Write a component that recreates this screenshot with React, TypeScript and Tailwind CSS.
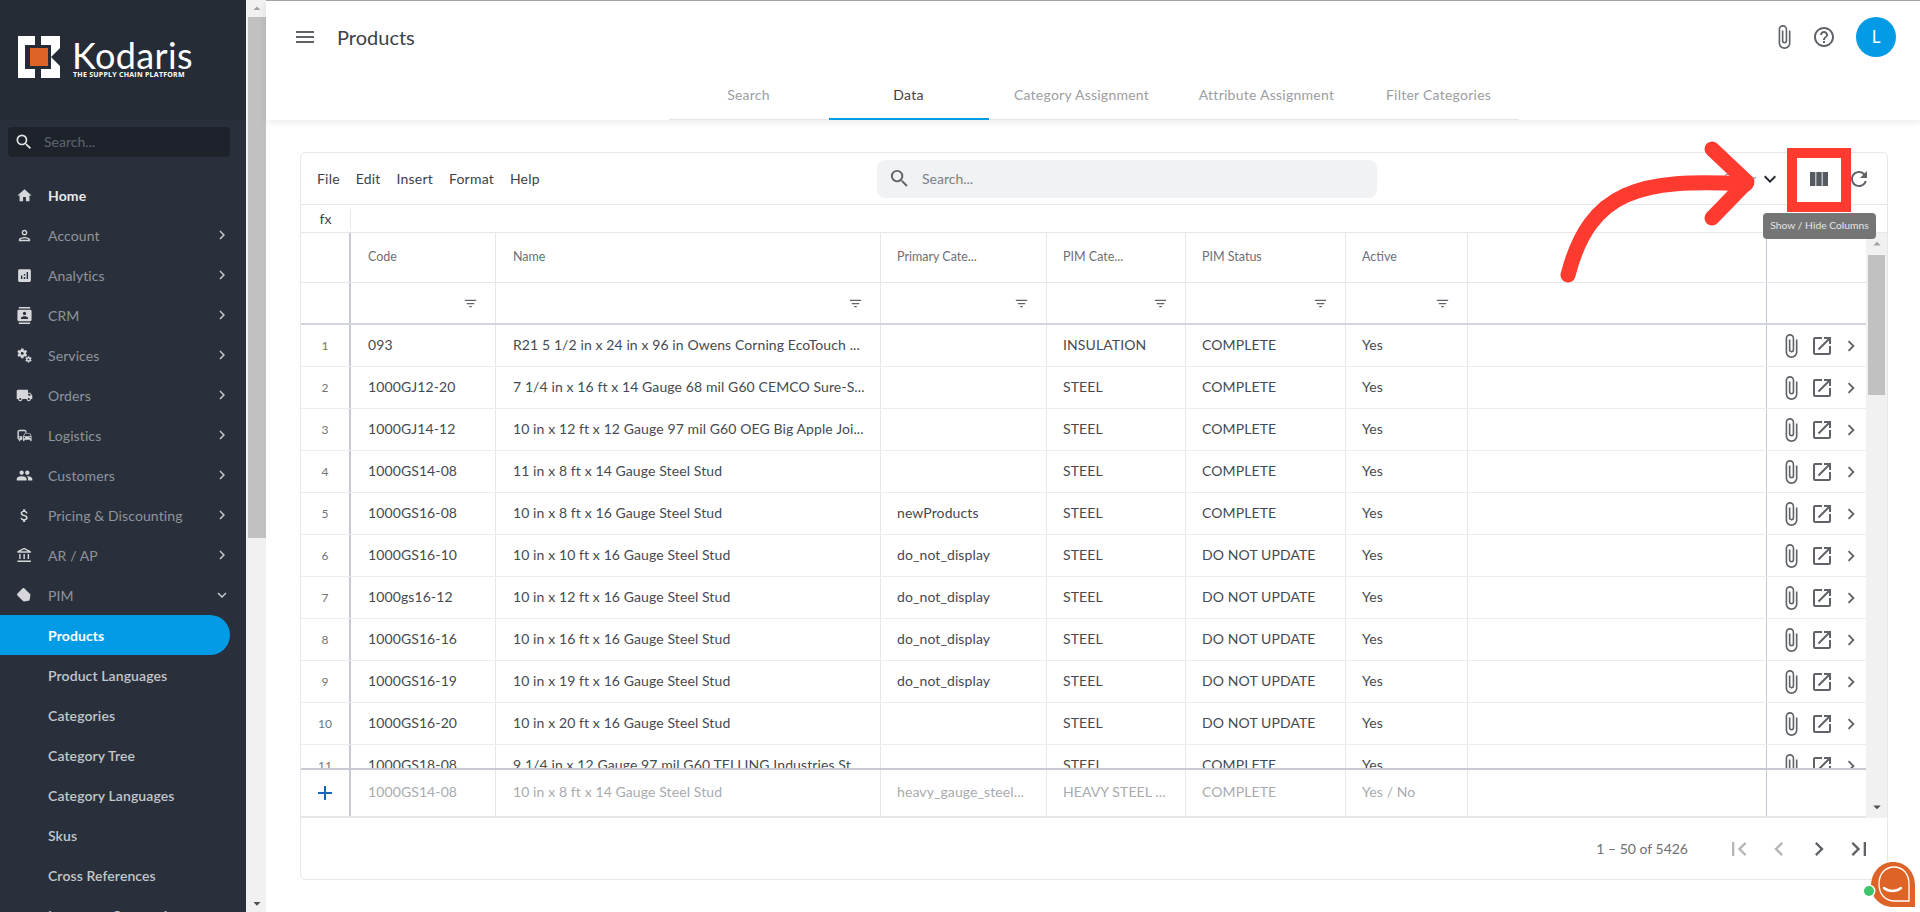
import { MdHome, MdOutlinePerson, MdAnalytics, MdContacts, MdMiscellaneousServices, MdLocalShipping, MdCommute, MdPeople, MdAttachMoney, MdOutlineAccountBalance, MdLabel, MdChevronRight, MdExpandMore, MdSearch, MdMenu, MdAttachFile, MdHelpOutline, MdRefresh, MdFilterList, MdOpenInNew, MdAdd, MdFirstPage, MdLastPage, MdChevronLeft, MdArrowDropUp, MdArrowDropDown } from 'react-icons/md'

const font = "font-['Lato','Open_Sans',sans-serif]"
const gridCols = 'grid grid-cols-[50px_145px_385px_166px_139px_160px_122px_299px_99px]'

const menu = [
  { label: 'Home', icon: MdHome, active: true },
  { label: 'Account', icon: MdOutlinePerson, arrow: true },
  { label: 'Analytics', icon: MdAnalytics, arrow: true },
  { label: 'CRM', icon: MdContacts, arrow: true },
  { label: 'Services', icon: MdMiscellaneousServices, arrow: true },
  { label: 'Orders', icon: MdLocalShipping, arrow: true },
  { label: 'Logistics', icon: MdCommute, arrow: true },
  { label: 'Customers', icon: MdPeople, arrow: true },
  { label: 'Pricing & Discounting', icon: MdAttachMoney, arrow: true },
  { label: 'AR / AP', icon: MdOutlineAccountBalance, arrow: true },
]

const subMenu = ['Product Languages', 'Categories', 'Category Tree', 'Category Languages', 'Skus', 'Cross References', 'Inventory Companies']

const rows = [
  ['093', 'R21 5 1/2 in x 24 in x 96 in Owens Corning EcoTouch ...', '', 'INSULATION', 'COMPLETE'],
  ['1000GJ12-20', '7 1/4 in x 16 ft x 14 Gauge 68 mil G60 CEMCO Sure-S...', '', 'STEEL', 'COMPLETE'],
  ['1000GJ14-12', '10 in x 12 ft x 12 Gauge 97 mil G60 OEG Big Apple Joi...', '', 'STEEL', 'COMPLETE'],
  ['1000GS14-08', '11 in x 8 ft x 14 Gauge Steel Stud', '', 'STEEL', 'COMPLETE'],
  ['1000GS16-08', '10 in x 8 ft x 16 Gauge Steel Stud', 'newProducts', 'STEEL', 'COMPLETE'],
  ['1000GS16-10', '10 in x 10 ft x 16 Gauge Steel Stud', 'do_not_display', 'STEEL', 'DO NOT UPDATE'],
  ['1000gs16-12', '10 in x 12 ft x 16 Gauge Steel Stud', 'do_not_display', 'STEEL', 'DO NOT UPDATE'],
  ['1000GS16-16', '10 in x 16 ft x 16 Gauge Steel Stud', 'do_not_display', 'STEEL', 'DO NOT UPDATE'],
  ['1000GS16-19', '10 in x 19 ft x 16 Gauge Steel Stud', 'do_not_display', 'STEEL', 'DO NOT UPDATE'],
  ['1000GS16-20', '10 in x 20 ft x 16 Gauge Steel Stud', '', 'STEEL', 'DO NOT UPDATE'],
  ['1000GS18-08', '9 1/4 in x 12 Gauge 97 mil G60 TELLING Industries St...', '', 'STEEL', 'COMPLETE'],
]

const headers = ['Code', 'Name', 'Primary Cate...', 'PIM Cate...', 'PIM Status', 'Active']

function Sidebar() {
  return (
    <aside className="w-[246px] h-full shrink-0 bg-[#2a303b] overflow-hidden flex flex-col">
      {/* logo */}
      <div className="h-[120px] shrink-0 bg-[#262c36] flex items-start pt-[36px] pl-[18px] gap-[12px]">
        <svg width="42" height="42" viewBox="0 0 42 42" className="shrink-0">
          <path fill="#fff" d="M0 0H17V9H7V33H17V42H0Z" />
          <path fill="#fff" d="M23 0H42V12L33 21L42 30V42H23V33H33V9H23Z" />
          <rect x="12" y="12" width="18" height="18" fill="#dd6326" />
        </svg>
        <div className="flex flex-col text-white">
          <span className="font-['Lato',sans-serif] text-[36px] leading-[26px] tracking-[0.4px] mt-[6px]">Kodaris</span>
          <span className="font-['Open_Sans',sans-serif] font-bold text-[7px] leading-[8px] tracking-[0.25px] mt-[3px] ml-[1px] whitespace-nowrap">THE SUPPLY CHAIN PLATFORM</span>
        </div>
      </div>

      {/* search */}
      <div className="pl-[8px] pr-[16px] pt-[8px] pb-[18px]">
        <div className="h-[30px] rounded bg-[#1e232b] flex items-center pl-[6px] gap-[10px] -mt-px">
          <MdSearch size={20} className="text-[#e4e4e4]" />
          <span className="text-[14px] text-[#5d646f] pb-[1px]">Search...</span>
        </div>
      </div>

      <nav className="flex flex-col tracking-[0.1px]">
        {menu.map(m => (
          <div key={m.label} className="h-[40px] shrink-0 flex items-center pl-[16px] pr-[15px]">
            <m.icon size={17} className="text-[#d5d7da] shrink-0" />
            <span className={`ml-[15px] flex-1 text-[14px] ${m.active ? 'text-[#e8e9eb] font-bold' : 'text-[#8f949c]'}`}>{m.label}</span>
            {m.arrow && <MdChevronRight size={18} className="text-[#c5c7cb]" />}
          </div>
        ))}
        <div className="h-[40px] shrink-0 flex items-center pl-[16px] pr-[15px]">
          <MdLabel size={17} className="text-[#d5d7da] shrink-0 rotate-45" />
          <span className="ml-[15px] flex-1 text-[14px] text-[#8f949c]">PIM</span>
          <MdExpandMore size={18} className="text-[#c5c7cb]" />
        </div>
        <div className="h-[40px] shrink-0 w-[230px] rounded-r-[20px] bg-[#039be5] flex items-center pl-[48px] text-[14px] font-bold text-white">Products</div>
        {subMenu.map(s => (
          <div key={s} className="h-[40px] shrink-0 flex items-center pl-[48px] text-[14px] font-semibold text-[#c3c6ca]">{s}</div>
        ))}
      </nav>
    </aside>
  )
}

function PageScrollbar() {
  return (
    <div className="w-[20px] h-full shrink-0 bg-[#f1f1f1] flex flex-col items-center pl-[2px]">
      <MdArrowDropUp size={18} className="text-[#a3a3a3] h-[17px] shrink-0" />
      <div className="w-full h-[521px] bg-[#c1c1c1] shrink-0" />
      <div className="flex-1" />
      <MdArrowDropDown size={18} className="text-[#505050] h-[17px] shrink-0" />
    </div>
  )
}

function Header() {
  return (
    <header className="h-[119px] shrink-0 bg-white shadow-[0_2px_8px_rgba(0,0,0,0.09)] flex flex-col relative">
      <div className="h-[71px] flex items-center pl-[27px] pr-[25px]">
        <MdMenu size={24} className="text-[#5f6368]" />
        <h1 className="ml-[20px] text-[20px] text-[#3c4149] flex-1">Products</h1>
        <MdAttachFile size={26} className="text-[#5f6368]" />
        <MdHelpOutline size={24} className="text-[#5f6368] ml-[15px]" />
        <div className="ml-[20px] w-[40px] h-[40px] rounded-full bg-[#039be5] flex items-center justify-center text-white text-[17px]">L</div>
      </div>
      <div className="flex justify-center h-[48px] text-[14px] text-[#9a9ea3] tracking-[0.25px]">
        <div className="flex border-b border-[#e6e6e6]">
          <div className="w-[160px] flex items-center justify-center pb-[2px]">Search</div>
          <div className="w-[160px] flex items-center justify-center pb-[2px] text-[#3c4149] border-b-2 border-[#039be5] -mb-px">Data</div>
          <div className="w-[186px] flex items-center justify-center pb-[2px]">Category Assignment</div>
          <div className="w-[184px] flex items-center justify-center pb-[2px]">Attribute Assignment</div>
          <div className="w-[160px] flex items-center justify-center pb-[2px]">Filter Categories</div>
        </div>
      </div>
    </header>
  )
}

function Toolbar() {
  return (
    <div className="h-[52px] shrink-0 border-b border-[#e6e7ea] flex items-center relative text-[#3c4149] text-[14px]">
      <div className="w-[576px] pl-[16px] flex gap-[16px] tracking-[0.2px]">
        <span>File</span><span>Edit</span><span>Insert</span><span>Format</span><span>Help</span>
      </div>
      <div className="w-[500px] h-[38px] rounded-lg bg-[#f1f2f4] flex items-center pl-[11px] gap-[11px]">
        <MdSearch size={23} className="text-[#5f6368]" />
        <span className="text-[#7c8087]">Search...</span>
      </div>
      <div className="flex-1 flex items-center pl-[347px]">
        <span className="text-[#9a9ea3]">Filter</span>
        <MdExpandMore size={24} className="ml-[2px] text-[#262b33]" />
        {/* show / hide columns */}
        <svg width="18" height="14" viewBox="0 0 18 14" className="ml-[28px] shrink-0">
          <path fill="#555a61" d="M0 0H5.4V14H0ZM6.3 0H11.7V14H6.3ZM12.6 0H18V14H12.6Z" />
        </svg>
        <MdRefresh size={24} className="ml-[19px] text-[#5f6368]" />
      </div>
    </div>
  )
}

function HeadRows() {
  return (
    <div className="shrink-0">
      <div className={`${gridCols} h-[50px] border-b border-[#e6e7ea] text-[12.5px] text-[#6c7077]`}>
        <div className="border-r-2 border-[#c6c8d2]" />
        {headers.map((h, j) => (
          <div key={h} className={`border-r border-[#e6e7ea] flex items-center ${j < 2 ? 'pl-[17px]' : 'pl-[16px]'}`}>{h}</div>
        ))}
        <div className="border-r border-[#c6c8d2]" />
        <div />
      </div>
      <div className={`${gridCols} h-[42px] border-b-2 border-[#d3d5dc]`}>
        <div className="border-r-2 border-[#c6c8d2]" />
        {headers.map(h => (
          <div key={h} className="border-r border-[#e6e7ea] flex items-center justify-end pr-[17px]">
            <MdFilterList size={15} className="text-[#5f6368]" />
          </div>
        ))}
        <div className="border-r border-[#c6c8d2]" />
        <div />
      </div>
    </div>
  )
}

function BodyRows() {
  return (
    <div className="flex-1 overflow-hidden">
      {rows.map((r, i) => (
        <div key={r[0]} className={`${gridCols} h-[42px] border-b border-[#eceded] text-[14px] text-[#454a52] tracking-[0.1px]`}>
          <div className="border-r-2 border-[#c6c8d2] flex items-center justify-center text-[12px] text-[#70747b]">{i + 1}</div>
          {r.map((c, j) => (
            <div key={j} className={`border-r border-[#e6e7ea] flex items-center pb-[2px] whitespace-nowrap ${j < 2 ? 'pl-[17px]' : 'pl-[16px]'}`}>{c}</div>
          ))}
          <div className="border-r border-[#e6e7ea] flex items-center pl-[16px] pb-[2px]">Yes</div>
          <div className="border-r border-[#c6c8d2]" />
          <div className="flex items-center pl-[11px] text-[#5f6368]">
            <MdAttachFile size={26} />
            <MdOpenInNew size={24} className="ml-[6px]" />
            <MdChevronRight size={22} className="ml-[6px]" />
          </div>
        </div>
      ))}
    </div>
  )
}

function AddRow() {
  return (
    <div className={`${gridCols} h-[50px] shrink-0 border-t-2 border-b-2 border-t-[#c6c8d2] border-b-[#e6e7ea] text-[14px] text-[#a8abb0] bg-white tracking-[0.1px]`}>
      <div className="border-r-2 border-[#c6c8d2] flex items-center justify-center">
        <MdAdd size={24} className="text-[#1565c0]" />
      </div>
      {['1000GS14-08', '10 in x 8 ft x 14 Gauge Steel Stud', 'heavy_gauge_steel...', 'HEAVY STEEL ...', 'COMPLETE', 'Yes / No'].map((c, j) => (
        <div key={c} className={`border-r border-[#e6e7ea] flex items-center pb-[3px] whitespace-nowrap ${j < 2 ? 'pl-[17px]' : 'pl-[16px]'}`}>{c}</div>
      ))}
      <div className="border-r border-[#c6c8d2]" />
      <div />
    </div>
  )
}

function Pagination() {
  return (
    <div className="flex-1 flex items-center justify-end pr-[14px] text-[14px] text-[#6c7077]">
      <span className="mr-[37px]">1 – 50 of 5426</span>
      <div className="flex gap-[12px]">
        <MdFirstPage size={28} className="text-[#b4b6ba]" />
        <MdChevronLeft size={28} className="text-[#b4b6ba]" />
        <MdChevronRight size={28} className="text-[#5f6368]" />
        <MdLastPage size={28} className="text-[#5f6368]" />
      </div>
    </div>
  )
}

function Annotation() {
  return (
    <>
      <svg className="absolute left-0 top-0 pointer-events-none" width="1920" height="912" viewBox="0 0 1920 912" fill="none">
        <path d="M1568 275C1590 190 1640 178 1746 184" stroke="#ff3b30" strokeWidth="15" strokeLinecap="round" />
        <path d="M1712 149L1747 182L1712 218" stroke="#ff3b30" strokeWidth="15" strokeLinecap="round" strokeLinejoin="round" />
      </svg>
      <div className="absolute left-[1787px] top-[148px] w-[64px] h-[64px] border-[10px] border-[#ff3b30]" />
      <div className="absolute left-[1763px] top-[213px] w-[113px] h-[26px] rounded bg-[#757575] flex items-center justify-center text-[10.3px] text-[#e4e4e4] whitespace-nowrap">Show / Hide Columns</div>
    </>
  )
}

function ChatBubble() {
  return (
    <div className="absolute left-[1863px] top-[862px] w-[57px] h-[50px]">
      <svg width="57" height="50" viewBox="-6 0 57 50">
        <path d="M2 24C2 10 12 0 24 0C37 0 46 10 46 24V45H24C12 45 2 36 2 24Z" fill="#dd6326" />
        <path d="M10 22C10 12 16 5 25 5C34 5 40 12 40 22V39H26C16 39 10 32 10 22Z" fill="none" stroke="#fff" strokeWidth="1.3" />
        <path d="M15 26C20 30 27 30 32 26" fill="none" stroke="#fff" strokeWidth="2.4" strokeLinecap="round" />
        <circle cx="0" cy="29" r="6.5" fill="#fff" />
        <circle cx="0" cy="29" r="5" fill="#3fc56b" />
      </svg>
    </div>
  )
}

export default function App() {
  return (
    <div className={`${font} relative w-[1920px] h-[912px] overflow-hidden flex bg-white`}>
      <Sidebar />
      <PageScrollbar />
      <main className="flex-1 h-full flex flex-col border-t border-[#a8a8a8]">
        <Header />
        <div className="pl-[34px] pr-[33px] pt-[32px]">
          <div className="h-[728px] border border-[#e6e7ea] rounded-md bg-white flex flex-col">
            <Toolbar />
            <div className="h-[28px] shrink-0 border-b border-[#e6e7ea] flex items-center text-[#3c4149] text-[14px]">
              <div className="w-[50px] h-[20px] border-r border-[#e6e7ea] flex items-center justify-center">fx</div>
            </div>
            <div className="h-[585px] shrink-0 flex">
              <div className="w-[1565px] flex flex-col">
                <HeadRows />
                <BodyRows />
                <AddRow />
              </div>
              <div className="w-[21px] bg-[#f1f1f1] flex flex-col items-center">
                <MdArrowDropUp size={18} className="text-[#a3a3a3] h-[22px] shrink-0" />
                <div className="w-[17px] h-[140px] bg-[#c1c1c1] shrink-0" />
                <div className="flex-1" />
                <MdArrowDropDown size={18} className="text-[#505050] h-[22px] shrink-0" />
              </div>
            </div>
            <Pagination />
          </div>
        </div>
      </main>
      <Annotation />
      <ChatBubble />
    </div>
  )
}
